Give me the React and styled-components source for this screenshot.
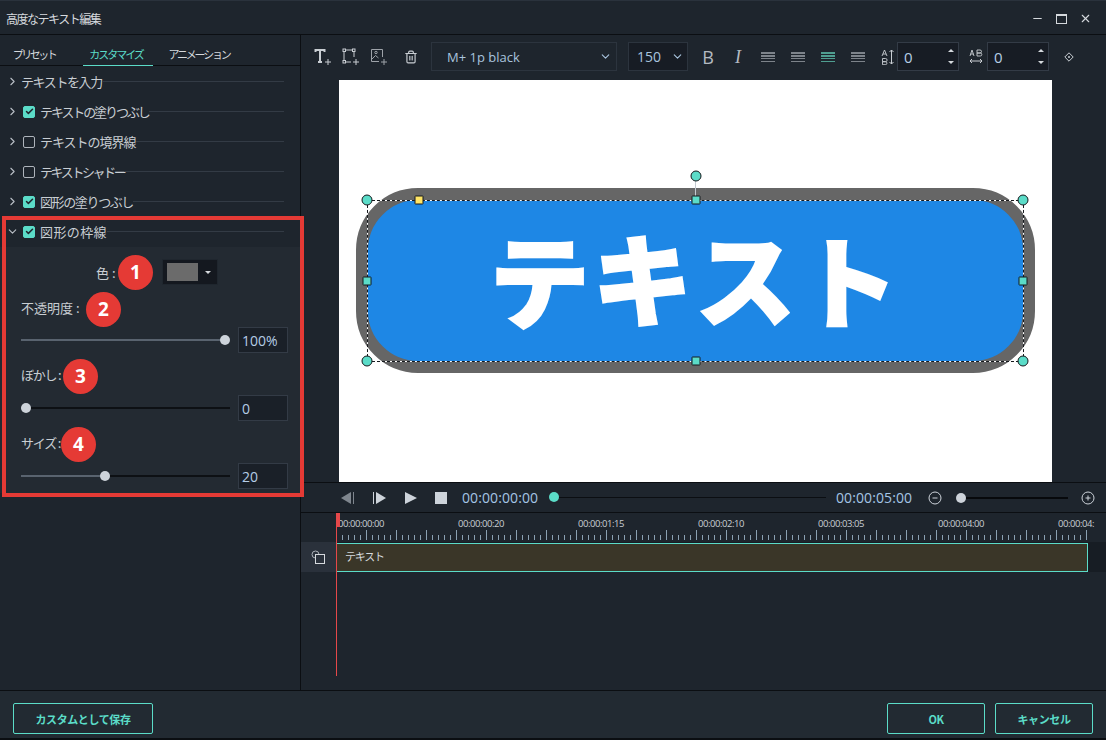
import React from 'react';
import styled, { createGlobalStyle } from 'styled-components';
import { ChevronRight, ChevronDown, Check, Minus, X, Trash2 } from 'lucide-react';

const JP = `'Noto Sans CJK JP', 'Noto Sans', sans-serif`;
const TEAL = '#5bdcc8';

const GlobalStyle = createGlobalStyle`
  html, body {
    margin: 0;
    padding: 0;
    background: #1e252d;
    overflow: hidden;
  }
  * {
    box-sizing: border-box;
  }
`;

const Window = styled.div`
  position: relative;
  width: 1106px;
  height: 740px;
  display: flex;
  flex-direction: column;
  background: #1e252d;
  color: #d5d9dd;
  font-family: ${JP};
  font-size: 12px;
  overflow: hidden;
`;

const TitleBar = styled.div`
  height: 35px;
  flex: none;
  display: flex;
  align-items: center;
  padding: 2px 14px 0 6px;
  border-top: 1px solid #2a323c;
  border-bottom: 1px solid #0b0e12;
  letter-spacing: -1.5px;
`;
const TitleText = styled.span`
  flex: 1;
`;
const WinButtons = styled.div`
  display: flex;
  align-items: center;
  gap: 12px;
  color: #d5d9dd;
`;
const MaxBox = styled.span`
  width: 11px;
  height: 10px;
  border: 1px solid #d5d9dd;
  border-top-width: 2px;
`;

const Body = styled.div`
  flex: 1;
  display: flex;
  min-height: 0;
`;

/* left side */
const Side = styled.aside`
  width: 301px;
  flex: none;
  border-right: 1px solid #0b0e12;
  display: flex;
  flex-direction: column;
`;
const Tabs = styled.div`
  height: 31px;
  flex: none;
  display: flex;
  border-bottom: 1px solid #0b0e12;
  padding-left: 5px;
`;
const Tab = styled.div`
  width: ${p => p.$w}px;
  margin-left: ${p => p.$ml || 0}px;
  display: flex;
  align-items: center;
  justify-content: center;
  font-size: 11px;
  letter-spacing: ${p => p.$ls}px;
  padding: 7px ${p => p.$pr || 0}px 0 0;
  margin-bottom: -1px;
  color: ${p => (p.$active ? TEAL : '#d5d9dd')};
  border-bottom: 1px solid ${p => (p.$active ? TEAL : 'transparent')};
`;
const Section = styled.div`
  height: 30px;
  display: flex;
  align-items: center;
  padding: 1px 16px 0 6px;
  color: #c9ced3;
`;
const Chevron = styled.span`
  width: 15px;
  flex: none;
  display: flex;
  color: #b9bfc6;
`;
const CheckBox = styled.span`
  width: 12px;
  height: 12px;
  flex: none;
  margin: 0 5px 0 2px;
  border-radius: 2px;
  display: flex;
  align-items: center;
  justify-content: center;
  border: 1px solid ${p => (p.$on ? TEAL : '#aeb4bb')};
  background: ${p => (p.$on ? TEAL : 'transparent')};
  color: #1e252d;
`;
const SectionLabel = styled.span`
  font-size: 13px;
  letter-spacing: ${p => p.$ls}px;
  white-space: nowrap;
`;
const Rule = styled.span`
  flex: 1;
  height: 1px;
  background: #333b45;
`;
const Panel = styled.div`
  height: 246px;
  margin-top: 1px;
  background: #232a32;
  padding: 12px 12px 0 21px;
  display: flex;
  flex-direction: column;
  gap: 7px;
`;
const ColorRow = styled.div`
  height: 26px;
  display: flex;
  align-items: center;
  padding-left: 75px;
`;
const Label = styled.span`
  width: ${p => p.$w}px;
  flex: none;
  font-size: 13px;
  letter-spacing: ${p => p.$ls || 0}px;
  margin-bottom: ${p => p.$up || 0}px;
  color: #c9ced3;
  white-space: nowrap;
`;
const Badge = styled.span`
  width: 35px;
  height: 35px;
  flex: none;
  border-radius: 50%;
  background: #e53a35;
  color: #fff;
  font-family: 'Open Sans', sans-serif;
  font-weight: 700;
  font-size: 19px;
  display: flex;
  align-items: center;
  justify-content: center;
`;
const ColorButton = styled.div`
  width: 56px;
  height: 26px;
  margin-left: 9px;
  background: #14181f;
  border: 1px solid #1f262e;
  display: flex;
  align-items: center;
  padding-left: 4px;
  gap: 7px;
`;
const Swatch = styled.span`
  width: 31px;
  height: 18px;
  background: #6b6b6b;
`;
const Caret = styled.span`
  width: 0;
  height: 0;
  border-left: 3px solid transparent;
  border-right: 3px solid transparent;
  border-top: 3px solid #d5d9dd;
`;
const Field = styled.div`
  display: flex;
  flex-direction: column;
`;
const LabelRow = styled.div`
  height: 35px;
  display: flex;
  align-items: center;
  padding-bottom: ${p => p.$raise || 0}px;
`;
const SliderRow = styled.div`
  height: 26px;
  display: flex;
  align-items: center;
  gap: 8px;
`;
const Slider = styled.div`
  position: relative;
  width: 209px;
  height: 2px;
  background: #0d1014;
`;
const SliderFill = styled.div`
  height: 100%;
  background: #59636f;
`;
const Thumb = styled.span`
  position: absolute;
  top: -4px;
  width: 10px;
  height: 10px;
  margin-left: -5px;
  border-radius: 50%;
  background: #cdd3da;
`;
const NumberBox = styled.div`
  width: 50px;
  height: 26px;
  background: #1a2028;
  border: 1px solid #333b46;
  display: flex;
  align-items: center;
  padding-left: 3px;
  color: #b5cde6;
  font-family: 'Open Sans', sans-serif;
  font-size: 14px;
`;

/* right side */
const Main = styled.main`
  flex: 1;
  min-width: 0;
  display: flex;
  flex-direction: column;
`;
const Toolbar = styled.div`
  height: 45px;
  flex: none;
  display: flex;
  align-items: center;
  padding: 0 0 2px 13px;
`;
const ToolIcons = styled.div`
  display: flex;
  align-items: center;
  gap: 10px;
  width: 117px;
  color: #c9ced3;
`;
const Select = styled.div`
  width: ${p => p.$w}px;
  height: 29px;
  margin-right: ${p => p.$mr || 0}px;
  flex: none;
  display: flex;
  align-items: center;
  justify-content: space-between;
  padding: 0 ${p => p.$pr}px 0 ${p => p.$pl}px;
  background: ${p => p.$bg || 'transparent'};
  border: 1px solid #2c343e;
  color: #a9c4de;
  font-family: 'Open Sans', sans-serif;
  font-size: ${p => p.$size}px;
`;
const FormatIcons = styled.div`
  display: flex;
  align-items: center;
`;
const FormatIcon = styled.span`
  width: 30px;
  display: flex;
  justify-content: center;
  font-family: ${p => (p.$serif ? "'Liberation Serif', serif" : "'Open Sans', sans-serif")};
  font-style: ${p => (p.$serif ? 'italic' : 'normal')};
  font-size: 18px;
  line-height: 20px;
  color: #b4bac1;
`;
const AlignLines = styled.span`
  width: 14px;
  height: 10px;
  background: repeating-linear-gradient(
    to bottom,
    ${p => (p.$on ? '#4f9e90' : '#7d838a')} 0 1.5px,
    transparent 1.5px 3px
  );
`;
const SpinBox = styled.div`
  width: 62px;
  height: 29px;
  flex: none;
  background: #171c24;
  border: 1px solid #333b46;
  display: flex;
  align-items: center;
  justify-content: space-between;
  padding: 0 4px 0 6px;
  color: #b5cde6;
  font-family: 'Open Sans', sans-serif;
  font-size: 15px;
`;
const Spin = styled.span`
  display: flex;
  flex-direction: column;
  gap: 9px;
`;
const SpinUp = styled.span`
  width: 0;
  height: 0;
  border-left: 3px solid transparent;
  border-right: 3px solid transparent;
  border-bottom: 3px solid #d5d9dd;
`;
const SpinDown = styled(SpinUp)`
  border-bottom: 0;
  border-top: 3px solid #d5d9dd;
`;
const SpacingIcon = styled.span`
  display: flex;
  margin: ${p => p.$m};
  color: #c9ced3;
`;

const Stage = styled.div`
  height: 403px;
  flex: none;
  padding-left: 38px;
  border-bottom: 1px solid #0b0e12;
`;
const Canvas = styled.div`
  position: relative;
  width: 713px;
  height: 402px;
  background: #fff;
`;
const Shape = styled.div`
  position: absolute;
  left: 17px;
  top: 108px;
  width: 679px;
  height: 185px;
  border: 12px solid #666666;
  border-radius: 62px;
  background: #1e87e5;
  display: flex;
  align-items: center;
  justify-content: center;
  color: #fff;
  font-weight: 900;
  font-size: 100px;
  letter-spacing: 3px;
  line-height: 1;
  -webkit-text-stroke: 2px #fff;
`;
const Glyph = styled.span`
  display: inline-block;
  transform: translateY(${p => p.$y}px) rotate(${p => p.$r}deg);
`;
const Selection = styled.div`
  position: absolute;
  left: 28px;
  top: 120px;
  width: 657px;
  height: 162px;
  border: 1px solid #fff;
  &::after {
    content: '';
    position: absolute;
    inset: -1px;
    border: 1px dashed #15181c;
  }
`;
const Handle = styled.span`
  position: absolute;
  left: ${p => p.$x}px;
  top: ${p => p.$y}px;
  width: ${p => (p.$round ? 11 : 9)}px;
  height: ${p => (p.$round ? 11 : 9)}px;
  transform: translate(-50%, -50%);
  border: 1px solid #15181c;
  border-radius: ${p => (p.$round ? '50%' : '1px')};
  background: ${p => (p.$yellow ? '#ffe566' : TEAL)};
`;
const Stem = styled.span`
  position: absolute;
  left: 356px;
  top: 100px;
  width: 1px;
  height: 20px;
  background: #c3cad1;
`;

const Transport = styled.div`
  height: 30px;
  flex: none;
  display: flex;
  align-items: center;
  padding-left: 40px;
  border-bottom: 1px solid #0b0e12;
`;
const TransportIcons = styled.div`
  display: flex;
  align-items: center;
  gap: 18px;
  width: 121px;
  color: #cdd3da;
`;
const Time = styled.span`
  font-family: 'Open Sans', sans-serif;
  font-size: 14px;
  letter-spacing: 0.1px;
  color: #a5c5e6;
  width: ${p => p.$w}px;
  flex: none;
`;
const Seek = styled.div`
  position: relative;
  width: 272px;
  height: 1px;
  background: #0b0e12;
  margin-right: 10px;
  flex: none;
`;
const SeekKnob = styled.span`
  position: absolute;
  left: -5px;
  top: -5px;
  width: 10px;
  height: 10px;
  border-radius: 50%;
  background: ${TEAL};
`;
const ZoomSlider = styled.div`
  position: relative;
  width: 112px;
  height: 2px;
  margin: 0 13px 0 14px;
  background: #07090c;
  flex: none;
`;
const ZoomKnob = styled.span`
  position: absolute;
  left: 0;
  top: -4px;
  width: 10px;
  height: 10px;
  border-radius: 50%;
  background: #cdd3da;
`;
const RoundIcon = styled.span`
  display: flex;
  color: #cdd3da;
`;

const Timeline = styled.div`
  position: relative;
  flex: 1;
  min-height: 0;
  display: flex;
  flex-direction: column;
`;
const Ruler = styled.div`
  height: 29px;
  flex: none;
  display: flex;
  flex-direction: column;
  padding-left: 37px;
  overflow: hidden;
`;
const RulerLabels = styled.div`
  display: flex;
  height: 15px;
  padding-top: 5px;
`;
const RulerLabel = styled.span`
  width: 120px;
  flex: none;
  font-family: 'Open Sans', sans-serif;
  font-size: 9.5px;
  line-height: 12px;
  letter-spacing: -0.45px;
  color: #c9ced3;
`;
const Track = styled.div`
  height: 30px;
  flex: none;
  display: flex;
  background: #171d24;
`;
const TrackHead = styled.div`
  width: 35px;
  flex: none;
  background: #2a313b;
  display: flex;
  align-items: center;
  justify-content: center;
  margin-right: 1px;
`;
const Clip = styled.div`
  width: 751px;
  height: 29px;
  margin-top: 1px;
  background: #3a3628;
  border: 1px solid ${TEAL};
  border-left: 0;
  padding: 0 0 3px 8px;
  display: flex;
  align-items: center;
  font-size: 11px;
  letter-spacing: -1.2px;
  color: #d5d9dd;
`;
const Playhead = styled.span`
  position: absolute;
  left: 35px;
  top: 0;
  width: 1px;
  height: 163px;
  background: #e5484a;
  &::before {
    content: '';
    position: absolute;
    left: 0;
    top: 0;
    width: 4px;
    height: 14px;
    background: #e5484a;
  }
`;

const Footer = styled.div`
  height: 50px;
  flex: none;
  display: flex;
  align-items: flex-start;
  gap: 10px;
  padding: 12px 13px 0;
  background: #222a32;
  border-top: 1px solid #0b0e12;
  border-bottom: 2px solid #0b0e12;
`;
const Button = styled.button`
  width: ${p => p.$w}px;
  height: 31px;
  margin-right: ${p => p.$mr || 0}px;
  background: transparent;
  border: 1px solid ${TEAL};
  border-radius: 2px;
  color: ${TEAL};
  font-family: ${JP};
  font-weight: 700;
  font-size: 11px;
  letter-spacing: -0.4px;
  padding: 0;
`;

const RedFrame = styled.div`
  position: absolute;
  left: 2px;
  top: 216px;
  width: 302px;
  height: 281px;
  border: 4px solid #e53a35;
  pointer-events: none;
`;

const sections = [
  { label: 'テキストの塗りつぶし', on: true, ls: -2.1 },
  { label: 'テキストの境界線', on: false, ls: -1 },
  { label: 'テキストシャドー', on: false, ls: -2.4 },
  { label: '図形の塗りつぶし', on: true, ls: -1.4 },
];

const handles = [
  { x: 28, y: 120, round: true },
  { x: 684, y: 120, round: true },
  { x: 28, y: 281, round: true },
  { x: 684, y: 281, round: true },
  { x: 356.5, y: 95.5, round: true },
  { x: 356.5, y: 120 },
  { x: 356.5, y: 281 },
  { x: 28, y: 201 },
  { x: 684, y: 201 },
  { x: 80, y: 120, yellow: true },
];

const rulerTimes = ['00:00:00:00', '00:00:00:20', '00:00:01:15', '00:00:02:10', '00:00:03:05', '00:00:04:00', '00:00:04:'];

function TextAddIcon() {
  return (
    <svg width="18" height="18" viewBox="0 0 18 18" fill="none" stroke="currentColor">
      <path d="M1.5 4V2h9v2M6 2v12M4 14h4" strokeWidth="2" />
      <path d="M11 14h6M14 11v6" />
    </svg>
  );
}
function BoxAddIcon() {
  return (
    <svg width="18" height="18" viewBox="0 0 18 18" fill="none" stroke="currentColor">
      <path d="M4 2h6M2 4v8M12 4v5M4 14h5M11 14h6M14 11v6" />
      <rect x="1" y="1" width="2.5" height="2.5" />
      <rect x="10.5" y="1" width="2.5" height="2.5" />
      <rect x="1" y="12.5" width="2.5" height="2.5" />
    </svg>
  );
}
function ImageAddIcon() {
  return (
    <svg width="18" height="18" viewBox="0 0 18 18" fill="none" stroke="currentColor" opacity="0.75">
      <path d="M9 13.5H1.5v-12h11V9" />
      <path d="M2 11l3.5-3.5 3 2.5" />
      <circle cx="6" cy="4.5" r="1.2" />
      <path d="M11 14h6M14 11v6" />
    </svg>
  );
}
function LineHeightIcon() {
  return (
    <svg width="14" height="16" viewBox="0 0 14 16" fill="none" stroke="currentColor">
      <path d="M1 7l2.5-6L6 7M2 5h3M1.5 9.5h3a1.5 1.5 0 0 1 0 3.2h-3zM1.5 12.7h3.4a1.6 1.6 0 0 1 0 3h-3.4z" strokeWidth="0.9" />
      <path d="M10.5 1v14M8.5 3l2-2 2 2M8.5 13l2 2 2-2" />
    </svg>
  );
}
function LetterSpaceIcon() {
  return (
    <svg width="14" height="16" viewBox="0 0 14 16" fill="none" stroke="currentColor">
      <path d="M1 7l2-6 2 6M1.7 5h2.6M8 1h3a1.5 1.5 0 0 1 0 3H8zM8 4h3.3a1.5 1.5 0 0 1 0 3H8z" strokeWidth="0.9" />
      <path d="M1 12h12M3 10l-2 2 2 2M11 10l2 2-2 2" />
    </svg>
  );
}
function KeyframeIcon() {
  return (
    <svg width="10" height="10" viewBox="0 0 10 10" fill="none" stroke="#c9ced3">
      <path d="M5 .8L9.2 5 5 9.2.8 5z" />
      <circle cx="5" cy="5" r="1" fill="#c9ced3" stroke="none" />
    </svg>
  );
}
function PrevFrameIcon() {
  return (
    <svg width="14" height="12" viewBox="0 0 14 12" fill="#7f868e">
      <path d="M10 0v12L0 6z" />
      <rect x="12" width="1" height="12" />
    </svg>
  );
}
function NextFrameIcon() {
  return (
    <svg width="14" height="12" viewBox="0 0 14 12" fill="currentColor">
      <rect width="1" height="12" />
      <path d="M3 0v12l10-6z" />
    </svg>
  );
}
function PlayIcon() {
  return (
    <svg width="12" height="12" viewBox="0 0 12 12" fill="currentColor">
      <path d="M0 0v12l12-6z" />
    </svg>
  );
}
function StopIcon() {
  return (
    <svg width="12" height="12" viewBox="0 0 12 12" fill="currentColor">
      <rect width="12" height="12" />
    </svg>
  );
}
function CircleIcon({ plus }) {
  return (
    <svg width="14" height="14" viewBox="0 0 14 14" fill="none" stroke="currentColor">
      <circle cx="7" cy="7" r="6" />
      <path d={plus ? 'M4.5 7h5M7 4.5v5' : 'M4.5 7h5'} />
    </svg>
  );
}
function TrackIcon() {
  return (
    <svg width="15" height="15" viewBox="0 0 15 15" fill="none" stroke="#d5d9dd">
      <circle cx="4.5" cy="4.5" r="3.5" stroke="#aab0b7" />
      <rect x="4.5" y="4.5" width="9" height="9" fill="#2a313b" />
    </svg>
  );
}
function RulerTicks() {
  const ticks = [];
  for (let i = 0; i < 125; i++) {
    const x = 6 * i + 4;
    const long = i % 5 === 4;
    ticks.push(<path key={i} d={`M${x + 0.5} ${long ? 2 : 7}V12`} />);
  }
  return (
    <svg width="770" height="12" stroke="#8aa0b2" style={{ flex: 'none' }}>
      {ticks}
    </svg>
  );
}
function SpinControl({ value }) {
  return (
    <SpinBox>
      {value}
      <Spin>
        <SpinUp />
        <SpinDown />
      </Spin>
    </SpinBox>
  );
}
function SliderField({ label, width, ls, value, percent, fill, raise }) {
  return (
    <Field>
      <LabelRow $raise={raise}>
        <Label $w={width} $ls={ls} $up={4}>{label}</Label>
        <Badge>{fill}</Badge>
      </LabelRow>
      <SliderRow>
        <Slider>
          <SliderFill style={{ width: `${percent}%` }} />
          <Thumb style={{ left: `${percent}%` }} />
        </Slider>
        <NumberBox>{value}</NumberBox>
      </SliderRow>
    </Field>
  );
}

export default function App() {
  return (
    <Window>
      <GlobalStyle />
      <TitleBar>
        <TitleText>高度なテキスト編集</TitleText>
        <WinButtons>
          <Minus size={13} />
          <MaxBox />
          <X size={13} />
        </WinButtons>
      </TitleBar>
      <Body>
        <Side>
          <Tabs>
            <Tab $w={58} $ls={-2.5}>プリセット</Tab>
            <Tab $w={70} $ml={20} $ls={-2} $pr={4} $active>カスタマイズ</Tab>
            <Tab $w={76} $ml={8} $ls={-2.2}>アニメーション</Tab>
          </Tabs>
          <Section>
            <Chevron><ChevronRight size={13} /></Chevron>
            <SectionLabel $ls={-1.4}>テキストを入力</SectionLabel>
            <Rule />
          </Section>
          {sections.map(s => (
            <Section key={s.label}>
              <Chevron><ChevronRight size={13} /></Chevron>
              <CheckBox $on={s.on}>{s.on && <Check size={9} strokeWidth={4} />}</CheckBox>
              <SectionLabel $ls={s.ls}>{s.label}</SectionLabel>
              <Rule />
            </Section>
          ))}
          <Section>
            <Chevron><ChevronDown size={13} /></Chevron>
            <CheckBox $on><Check size={9} strokeWidth={4} /></CheckBox>
            <SectionLabel $ls={0.4}>図形の枠線</SectionLabel>
            <Rule />
          </Section>
          <Panel>
            <ColorRow>
              <Label $w={22}>色 :</Label>
              <Badge>1</Badge>
              <ColorButton>
                <Swatch />
                <Caret />
              </ColorButton>
            </ColorRow>
            <SliderField label="不透明度 :" width={65} value="100%" percent={97.5} fill="2" raise={1} />
            <SliderField label="ぼかし :" width={42} ls={-1.2} value="0" percent={2.5} fill="3" raise={3} />
            <SliderField label="サイズ :" width={40} ls={-1.2} value="20" percent={40} fill="4" raise={3} />
          </Panel>
        </Side>
        <Main>
          <Toolbar>
            <ToolIcons>
              <TextAddIcon />
              <BoxAddIcon />
              <ImageAddIcon />
              <Trash2 size={14} style={{ marginLeft: 6 }} />
            </ToolIcons>
            <Select $w={186} $pl={15} $pr={4} $size={13} $mr={11}>
              M+ 1p black
              <ChevronDown size={13} />
            </Select>
            <Select $w={60} $pl={8} $pr={3} $size={14} $bg="#171c24" $mr={5}>
              150
              <ChevronDown size={13} />
            </Select>
            <FormatIcons>
              <FormatIcon>B</FormatIcon>
              <FormatIcon $serif>I</FormatIcon>
              <FormatIcon><AlignLines /></FormatIcon>
              <FormatIcon><AlignLines /></FormatIcon>
              <FormatIcon><AlignLines $on /></FormatIcon>
              <FormatIcon><AlignLines /></FormatIcon>
            </FormatIcons>
            <SpacingIcon $m="0 2px 0 8px"><LineHeightIcon /></SpacingIcon>
            <SpinControl value="0" />
            <SpacingIcon $m="0 4px 0 10px"><LetterSpaceIcon /></SpacingIcon>
            <SpinControl value="0" />
            <SpacingIcon $m="0 0 0 15px"><KeyframeIcon /></SpacingIcon>
          </Toolbar>
          <Stage>
            <Canvas>
              <Shape>
                <Glyph $r={0} $y={-3}>テ</Glyph>
                <Glyph $r={3} $y={-5}>キ</Glyph>
                <Glyph $r={0} $y={-5}>ス</Glyph>
                <Glyph $r={0} $y={-3}>ト</Glyph>
              </Shape>
              <Selection />
              <Stem />
              {handles.map(h => (
                <Handle key={`${h.x}-${h.y}`} $x={h.x} $y={h.y} $round={h.round} $yellow={h.yellow} />
              ))}
            </Canvas>
          </Stage>
          <Transport>
            <TransportIcons>
              <PrevFrameIcon />
              <NextFrameIcon />
              <PlayIcon />
              <StopIcon />
            </TransportIcons>
            <Time $w={92}>00:00:00:00</Time>
            <Seek>
              <SeekKnob />
            </Seek>
            <Time $w={92}>00:00:05:00</Time>
            <RoundIcon><CircleIcon /></RoundIcon>
            <ZoomSlider>
              <ZoomKnob />
            </ZoomSlider>
            <RoundIcon><CircleIcon plus /></RoundIcon>
          </Transport>
          <Timeline>
            <Ruler>
              <RulerLabels>
                {rulerTimes.map(t => (
                  <RulerLabel key={t}>{t}</RulerLabel>
                ))}
              </RulerLabels>
              <RulerTicks />
            </Ruler>
            <Track>
              <TrackHead><TrackIcon /></TrackHead>
              <Clip>テキスト</Clip>
            </Track>
            <Playhead />
          </Timeline>
        </Main>
      </Body>
      <Footer>
        <Button $w={140} $mr={724}>カスタムとして保存</Button>
        <Button $w={98}>OK</Button>
        <Button $w={98}>キャンセル</Button>
      </Footer>
      <RedFrame />
    </Window>
  );
}
